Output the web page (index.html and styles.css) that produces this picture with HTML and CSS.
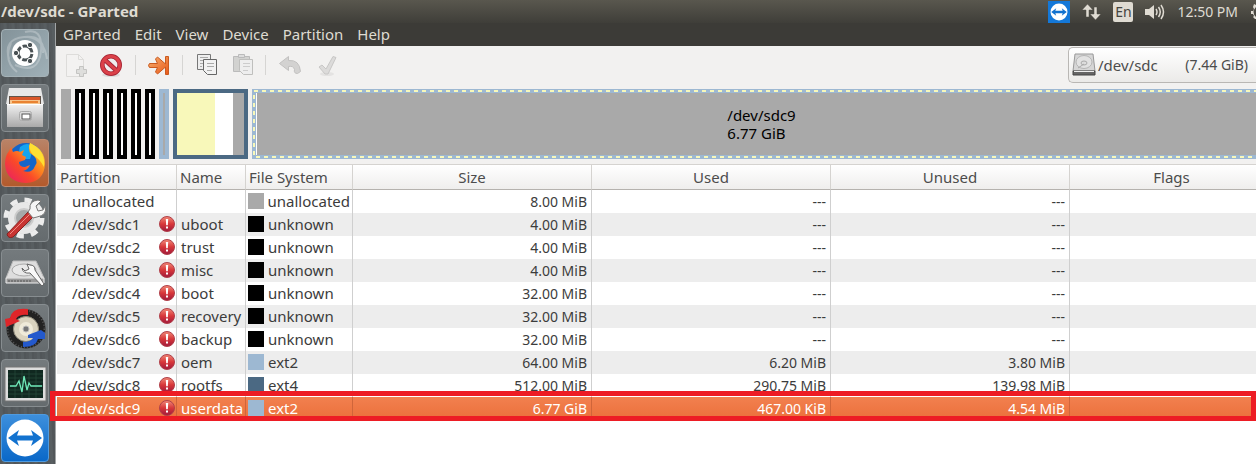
FILE: index.html
```html
<!DOCTYPE html>
<html lang="en">
<head>
<meta charset="utf-8">
<title>/dev/sdc - GParted</title>
<link rel="stylesheet" href="styles.css">
</head>
<body>
<svg width="0" height="0" class="defs" aria-hidden="true">
  <defs>
    <linearGradient id="red" x1="0" y1="0" x2="0" y2="1"><stop offset="0" stop-color="#f08a78"/><stop offset=".5" stop-color="#d8373a"/><stop offset="1" stop-color="#a01a3c"/></linearGradient>
    <linearGradient id="orange" x1="0" y1="0" x2="1" y2="1"><stop offset="0" stop-color="#f5b070"/><stop offset="1" stop-color="#ea5818"/></linearGradient>
    <linearGradient id="metal" x1="0" y1="0" x2="0" y2="1"><stop offset="0" stop-color="#f2f2f2"/><stop offset="1" stop-color="#a9a9a9"/></linearGradient>
    <linearGradient id="fire" x1="0" y1="1" x2="1" y2="0"><stop offset="0" stop-color="#e8186c"/><stop offset=".4" stop-color="#fa4a28"/><stop offset=".7" stop-color="#ffa01c"/><stop offset="1" stop-color="#fff04a"/></linearGradient>
    <symbol id="warn" viewBox="0 0 16 16"><circle cx="8" cy="8" r="7.500" fill="url(#red)" stroke="#b0404a"/><path d="M6.800 3h2.400l-.4 6.300H7.200zM7 10.500h2v2H7z" fill="#fff"/></symbol>
    <symbol id="teamviewer" viewBox="0 0 48 48"><circle cx="24" cy="24" r="18.500" fill="#fff"/><path d="M7 24l11-8-2 5.500h16L30 16l11 8-11 8 2-5.500H16l2 5.500z" fill="#1272cf"/></symbol>
  </defs>
</svg>

<header class="panel">
  <h1 class="panel-title">/dev/sdc - GParted</h1>
  <div class="indicators">
    <svg class="tv" width="22" height="22"><use href="#teamviewer"/></svg>
    <svg width="19" height="18" viewBox="0 0 19 18"><path d="M5.500 1L11 7H7v7H4V7H0zM13.500 17L8 11h4V4h3v7h4z" fill="#dfdbd2" stroke="#4a4943" stroke-width=".5"/></svg>
    <span class="lang">En</span>
    <svg class="sound" width="20" height="16" viewBox="0 0 20 16"><path d="M0 5h4l5-4v14l-5-4H0z" fill="#dfdbd2"/><path d="M11 5q2 3 0 6M13.500 3q3.500 5 0 10M16 1q5 7 0 14" fill="none" stroke="#dfdbd2" stroke-width="1.500"/></svg>
    <time>12:50 PM</time>
    <svg class="gear" width="5" height="18" viewBox="0 0 5 18"><path d="M5 2L3 1 2 4l1 2-1 2-2 0v3h2l1 2-1 1 2 2h1v-2q-5-5 0-10z" fill="#dfdbd2"/></svg>
  </div>
</header>

<div class="desktop">
  <nav class="launcher" aria-label="Launcher">
    <button class="tile dash" aria-label="Dash"><svg viewBox="0 0 48 48"><g fill="none" stroke="#fff" stroke-opacity=".25" stroke-width="2"><path d="M8 30Q2 10 23 8T42 24M14 36Q38 46 40 22T24 3M10 14Q2 32 16 43M27 8Q43 10 46 30"/></g><circle cx="24" cy="24" r="13" fill="#fff"/><circle cx="24" cy="24" r="7" fill="none" stroke="#4a5255" stroke-width="3" stroke-dasharray="12.700 2" stroke-dashoffset="-1"/><g fill="#4a5255" stroke="#fff"><circle cx="15" cy="24" r="2.700"/><circle cx="29" cy="16" r="2.700"/><circle cx="29" cy="32" r="2.700"/></g></svg></button>
    <button class="tile" aria-label="Files"><svg viewBox="0 0 48 48"><path d="M8 4h32l3 16H5z" fill="#e8e8e8"/><path d="M8 12h32v8H8z" fill="#62544a"/><path d="M9 13h30v3H9z" fill="#d9572a"/><path d="M9 16h30v4H9z" fill="#f6c48c"/><path d="M11 17h26v2H11z" fill="#e98332"/><path d="M6 20h36v23H6z" fill="url(#metal)"/><path d="M6 20.500h36" stroke="#fff"/><rect x="18.500" y="27.500" width="12" height="9" rx="2" fill="#ddd" stroke="#aaa"/><rect x="21" y="30" width="8" height="5" fill="#fff" stroke="#555"/></svg></button>
    <button class="tile firefox" aria-label="Firefox"><svg viewBox="0 0 48 48"><circle cx="25" cy="22" r="18" fill="#1465c8"/><path d="M19 8Q28 1 32 10L29 20 22 20 17 17z" fill="#16a4ee"/><path d="M29 4Q44 10 44 25Q43 43 25 44Q5 43 4 25Q4 17 8 12L10 8l2 5q4-2 7 0l4-2-2 5 4 2-1 3-6 2q0 5 6 5l5-2q-2 5-7 6 9 3 12-5Q39 20 29 14q-2-5 0-10z" fill="url(#fire)"/><path d="M29 4Q45 12 43 28q-4-8-11-12-5-6-3-12z" fill="#ffdf32"/></svg></button>
    <button class="tile" aria-label="System Settings"><svg viewBox="0 0 48 48"><circle cx="23" cy="24" r="16" fill="#e8e8e8"/><circle cx="23" cy="24" r="18" fill="none" stroke="#ececec" stroke-width="5" stroke-dasharray="7 7.130"/><circle cx="23" cy="24" r="9" fill="#a5a8a9" stroke="#ccc" stroke-width="2"/><path d="M6 40L28 17l5 5L12 43q-5 2-6-3z" fill="#c83432" stroke="#872221"/><path d="M9 40L29 20" stroke="#ef8b83"/><path d="M27 18l2-3q-1-8 8-9l3 1-5 5 2 5 5-1 2-4q3 9-8 11l-4 1z" fill="#f5f5f5" stroke="#777"/></svg></button>
    <button class="tile" aria-label="Disks"><svg viewBox="0 0 48 48"><path d="M12 12h23l8 17H5z" fill="#ddd" stroke="#bbb"/><path d="M5 29h38v5H5z" fill="#999" stroke="#eee"/><ellipse cx="23" cy="21" rx="12" ry="6" fill="#e8e8e8" stroke="#aaa"/><path d="M7 32h23" stroke="#555" stroke-dasharray="2 1"/><path d="M21 19q1 6 8 5l12 13 2-2-9-14q0-5-5-5l-3-1 2 5-4 2z" fill="#f8f8f8" stroke="#666"/></svg></button>
    <button class="tile" aria-label="Backup"><svg viewBox="0 0 48 48"><circle cx="25" cy="25" r="16" fill="none" stroke="#222" stroke-width="7"/><circle cx="25" cy="25" r="18.500" fill="none" stroke="#555" stroke-width="2" stroke-dasharray="1 2"/><circle cx="25" cy="25" r="12.500" fill="#d9d2be" stroke="#908b7b"/><circle cx="25" cy="25" r="7" fill="#efead9"/><circle cx="25" cy="25" r="3" fill="#777" stroke="#bbb"/><path d="M27 5Q11 3 9 14l-5 1 1 8 14-6-4-2q3-5 12-4z" fill="#df2529"/><path d="M22 43q13 0 15-8h7V29l-4-3-13 5v3l5 0q-2 4-10 4z" fill="#2459cc"/></svg></button>
    <button class="tile" aria-label="System Monitor"><svg viewBox="0 0 48 48"><path d="M4 8h41v34H4z" fill="#ddd" stroke="#777"/><path d="M7 11h35v28H7z" fill="#102820"/><g stroke="#264a3e" stroke-width=".7"><path d="M7 15h35M7 19h35M7 23h35M7 27h35M7 31h35M7 35h35M14 11v28M21 11v28M28 11v28M35 11v28"/></g><path d="M9 27h6l3-5 3 11 2-16 3 14 2-7 2 3h11" fill="none" stroke="#6fe8b8" stroke-width="1.300"/></svg></button>
    <button class="tile blue" aria-label="TeamViewer"><svg viewBox="0 0 48 48"><use href="#teamviewer"/></svg></button>
  </nav>

  <main class="window">
    <nav class="menubar" aria-label="Menu">
      <button>GParted</button><button>Edit</button><button>View</button><button>Device</button><button>Partition</button><button>Help</button>
    </nav>

    <div class="toolbar">
      <div class="tools">
        <button aria-label="New" disabled><svg width="24" height="26" viewBox="0 0 24 26"><path d="M2.500 2.500h12l5 5v17h-17z" fill="#f3f2f1" stroke="#dddcda"/><path d="M14.500 2.500v5h5" fill="none" stroke="#dddcda"/><path d="M15.500 14.500h4v3h3v4h-3v3h-4v-3h-3v-4h3z" fill="#dededc" stroke="#c4c4c2"/></svg></button>
        <button aria-label="Delete"><svg width="24" height="26" viewBox="0 0 24 26"><ellipse cx="11" cy="23" rx="9" ry="2" fill="#ddd"/><circle cx="11" cy="13" r="8.700" fill="#eee" stroke="#a52534" stroke-width="4.600"/><path d="M5 8l12 11" stroke="#a52534" stroke-width="4.600"/><circle cx="11" cy="13" r="8.700" fill="none" stroke="#db4149" stroke-width="3"/><path d="M5 8l12 11" stroke="#db4149" stroke-width="3"/></svg></button>
        <span class="sep"></span>
        <button aria-label="Resize/Move"><svg width="24" height="26" viewBox="0 0 24 26"><path d="M2.500 11.500h8L8.500 7l2-2 8 7V4.500h3v18h-3V15l-8 7-2-2 2-4.500h-8q-2-2 0-4z" fill="url(#orange)" stroke="#c95a20"/></svg></button>
        <span class="sep"></span>
        <button aria-label="Copy"><svg width="24" height="26" viewBox="0 0 24 26"><path d="M3.500 2.500h13v15h-13z" fill="#eee" stroke="#777"/><path d="M6 5.500h8M6 8.500h6M6 11.500h3M6 14.500h2" stroke="#aaa"/><path d="M9.500 7.500h13v15h-9l-4-4z" fill="#f2f2f2" stroke="#666"/><path d="M13 11.500h7M13 14.500h7M13 18.500h5" stroke="#aaa"/></svg></button>
        <button aria-label="Paste" disabled><svg width="24" height="26" viewBox="0 0 24 26"><path d="M3.500 4.500h16v15h-16z" fill="#d2d2d0" stroke="#bbb"/><path d="M8.500 5.500v-3h6v3z" fill="#ddd" stroke="#bbb"/><path d="M9.500 7.500h13v15h-9l-4-4z" fill="#eee" stroke="#bfbfbd"/><path d="M13 11.500h7M13 14.500h7M13 18.500h5" stroke="#ccc"/></svg></button>
        <span class="sep"></span>
        <button aria-label="Undo" disabled><svg width="24" height="26" viewBox="0 0 24 26"><path d="M2.500 11.500l9-7v4q11-1 12 11l-3 2q-4 0-3-4-1-4-6-3v4z" fill="#d3d2d1" stroke="#c2c1c0"/></svg></button>
        <button aria-label="Apply" disabled><svg width="24" height="26" viewBox="0 0 24 26"><ellipse cx="14" cy="22" rx="7" ry="2" fill="#e4e3e2"/><path d="M6 15l3-2 4 4L20 4.500l3 1L15 22h-3z" fill="#dcdbda" stroke="#c8c7c6"/></svg></button>
      </div>
      <button class="device" aria-label="Device"><svg width="24" height="26" viewBox="0 0 24 26"><path d="M3 2h18l2 17H1z" fill="#d6d6d6" stroke="#999"/><path d="M1 19h22v4H1z" fill="#666" stroke="#444"/><path d="M2 19.500h20" stroke="#eee"/><ellipse cx="12" cy="10" rx="8" ry="6.500" fill="#e2e2e2" stroke="#b5b5b5"/><ellipse cx="12" cy="11" rx="3" ry="2" fill="#ddd" stroke="#aaa"/><path d="M6 16l6-4" stroke="#aaa"/></svg><span>/dev/sdc</span><span class="size">(7.44 GiB)</span></button>
    </div>

    <section class="disk" aria-label="Disk layout">
      <div class="seg free"></div>
      <div class="seg unknown"></div><div class="seg unknown"></div><div class="seg unknown"></div><div class="seg unknown"></div><div class="seg unknown"></div><div class="seg unknown"></div>
      <div class="seg ext2"></div>
      <div class="seg ext4"><i class="used"></i><i class="unused"></i></div>
      <div class="seg selected"><div class="fill"><span>/dev/sdc9</span><span>6.77 GiB</span></div></div>
    </section>

    <div class="list">
      <table>
        <colgroup><col class="c-part"><col class="c-name"><col class="c-fs"><col class="c-num"><col class="c-num"><col class="c-num"><col></colgroup>
        <thead><tr><th>Partition</th><th>Name</th><th>File System</th><th class="mid">Size</th><th class="mid">Used</th><th class="mid">Unused</th><th class="mid flags">Flags</th></tr></thead>
        <tbody>
          <tr><td><div class="part">unallocated</div></td><td></td><td><div class="fs"><i class="sw-free"></i>unallocated</div></td><td>8.00 MiB</td><td>---</td><td>---</td><td></td></tr>
          <tr><td><div class="part">/dev/sdc1<svg><use href="#warn"/></svg></div></td><td>uboot</td><td><div class="fs"><i class="sw-unknown"></i>unknown</div></td><td>4.00 MiB</td><td>---</td><td>---</td><td></td></tr>
          <tr><td><div class="part">/dev/sdc2<svg><use href="#warn"/></svg></div></td><td>trust</td><td><div class="fs"><i class="sw-unknown"></i>unknown</div></td><td>4.00 MiB</td><td>---</td><td>---</td><td></td></tr>
          <tr><td><div class="part">/dev/sdc3<svg><use href="#warn"/></svg></div></td><td>misc</td><td><div class="fs"><i class="sw-unknown"></i>unknown</div></td><td>4.00 MiB</td><td>---</td><td>---</td><td></td></tr>
          <tr><td><div class="part">/dev/sdc4<svg><use href="#warn"/></svg></div></td><td>boot</td><td><div class="fs"><i class="sw-unknown"></i>unknown</div></td><td>32.00 MiB</td><td>---</td><td>---</td><td></td></tr>
          <tr><td><div class="part">/dev/sdc5<svg><use href="#warn"/></svg></div></td><td>recovery</td><td><div class="fs"><i class="sw-unknown"></i>unknown</div></td><td>32.00 MiB</td><td>---</td><td>---</td><td></td></tr>
          <tr><td><div class="part">/dev/sdc6<svg><use href="#warn"/></svg></div></td><td>backup</td><td><div class="fs"><i class="sw-unknown"></i>unknown</div></td><td>32.00 MiB</td><td>---</td><td>---</td><td></td></tr>
          <tr><td><div class="part">/dev/sdc7<svg><use href="#warn"/></svg></div></td><td>oem</td><td><div class="fs"><i class="sw-ext2"></i>ext2</div></td><td>64.00 MiB</td><td>6.20 MiB</td><td>3.80 MiB</td><td></td></tr>
          <tr><td><div class="part">/dev/sdc8<svg><use href="#warn"/></svg></div></td><td>rootfs</td><td><div class="fs"><i class="sw-ext4"></i>ext4</div></td><td>512.00 MiB</td><td>290.75 MiB</td><td>139.98 MiB</td><td></td></tr>
          <tr class="current"><td><div class="part">/dev/sdc9<svg><use href="#warn"/></svg></div></td><td>userdata</td><td><div class="fs"><i class="sw-ext2"></i>ext2</div></td><td>6.77 GiB</td><td>467.00 KiB</td><td>4.54 MiB</td><td></td></tr>
        </tbody>
      </table>
      <div class="highlight"></div>
    </div>
  </main>
</div>
</body>
</html>
```
FILE: styles.css
```css
* { box-sizing: border-box; }
body {
  margin: 0;
  min-height: 100vh;
  display: flex;
  flex-direction: column;
  overflow: hidden;
  background: #fff;
  color: #3c3c3c;
  font: 15px/18px "Noto Sans", "Open Sans", sans-serif;
}
.defs { position: absolute; }
button { margin: 0; padding: 0; border: 0; background: none; color: inherit; font: inherit; }
svg { display: block; flex: none; }

.panel {
  display: flex;
  justify-content: space-between;
  align-items: center;
  height: 23px;
  padding-left: 1px;
  background: linear-gradient(#59574e, #3f3e39);
  color: #dfdbd2;
}
.panel-title { margin: 0; font-size: 15px; line-height: 20px; padding-bottom: 2px; font-weight: 700; }
.indicators { display: flex; align-items: center; gap: 12px; font-size: 14px; }
.indicators time { margin-right: 1px; }
.tv { background: #1478d8; }
.lang {
  width: 20px;
  height: 20px;
  border-radius: 2px;
  background: #dfdbd2;
  color: #45443e;
  line-height: 20px;
  text-align: center;
}

.desktop { flex: 1; display: flex; }
.launcher {
  flex: none;
  display: flex;
  flex-direction: column;
  gap: 7px;
  width: 56px;
  padding: 6px 0 2px 1px;
  border-right: 1px solid #a2a5a6;
  background: repeating-linear-gradient(87deg, #54595c 0 2px, #585e61 3px 5px, #515659 6px 8px);
}
.tile {
  width: 48px;
  height: 48px;
  border: 1px solid #878d90;
  border-radius: 4px;
  background: linear-gradient(#747a7d, #656b6e);
}
.tile svg { width: 48px; height: 48px; margin: -1px; }
.tile.dash { background: linear-gradient(135deg, #84939a, #9fb0b7); border-color: #a4b1b6; }
.tile.firefox { background: linear-gradient(#b98367, #b35a2c); border-color: #c08a70; }
.tile.blue { background: linear-gradient(#3d8fdc, #0a68c8); border-color: #4f9be0; }

.window { flex: 1; min-width: 0; background: #fff; }
.menubar {
  display: flex;
  gap: 14px;
  height: 23px;
  padding-left: 7px;
  background: #3c3b37;
  color: #dfdbd2;
}
.menubar button { line-height: 23px; }

.toolbar {
  display: flex;
  justify-content: space-between;
  height: 38px;
  padding-left: 8px;
  background: #f2f1f0;
}
.tools { display: flex; align-items: center; gap: 12px; }
.sep { width: 1px; height: 20px; margin: 0 -1px; background: #d6d5d3; }
.device {
  display: flex;
  align-items: center;
  gap: 2px;
  width: 188px;
  height: 36px;
  margin-top: 1px;
  padding-left: 3px;
  border: 1px solid #b9b7b4;
  border-right: 0;
  border-radius: 5px 0 0 5px;
  background: linear-gradient(#fff, #ebeae8);
  color: #4c4c4c;
}
.size { margin: 0 8px 0 auto; font-size: 14px; }

.disk {
  display: flex;
  gap: 4px;
  height: 80px;
  padding: 5px 0 5px 5px;
  background: #f2f1f0;
}
.seg { flex: none; width: 10px; border: 4px solid; }
.free { border-color: #a9a9a9; background: #a9a9a9; }
.unknown { border-color: #000; background: #fff; }
.ext2 { border-color: #9db8d2; background: #a9a9a9; }
.ext4 { display: flex; width: 75px; border-color: #4b6983; background: #a9a9a9; }
.used { width: 38px; background: #f8f8ba; }
.unused { width: 18px; background: #fff; }
.selected {
  flex: 1;
  padding: 4px 0 4px 4px;
  border: 0;
  background:
    repeating-linear-gradient(90deg, #f8f8ba 0 4px, #9db8d2 4px 8px) 2px 1px / 100% 2px no-repeat,
    repeating-linear-gradient(90deg, #f8f8ba 0 4px, #9db8d2 4px 8px) 4px 67px / 100% 2px no-repeat,
    repeating-linear-gradient(#f8f8ba 0 4px, #9db8d2 4px 8px) 1px 6px / 2px 60px no-repeat,
    #9db8d2;
}
.fill {
  display: grid;
  align-content: center;
  justify-content: center;
  height: 100%;
  padding-left: 10px;
  border-left: 1px solid #fff;
  background: #a9a9a9;
  color: #000;
}

.list { position: relative; padding-left: 1px; }
table { width: 100%; table-layout: fixed; border-collapse: separate; border-spacing: 0; }
.c-part { width: 120px; }
.c-name { width: 69px; }
.c-fs { width: 107px; }
.c-num { width: 239px; }
th {
  height: 26px;
  padding: 0 3px 1px;
  border: solid #d5d3d0;
  border-width: 1px 1px 1px 0;
  border-bottom-color: #b5b2ae;
  background: linear-gradient(#fff, #efeeed);
  color: #4c4c4c;
  font-weight: 400;
  text-align: left;
  white-space: nowrap;
}
.mid { text-align: center; }
.flags { padding-left: 20px; }
td {
  height: 23px;
  padding: 0 4px;
  border-right: 1px solid #cfcfcf;
  font-size: 14px;
  text-align: right;
  white-space: nowrap;
}
td:nth-child(-n+3) { padding-bottom: 2px; font-size: 15px; text-align: left; }
td:nth-child(3) { padding: 0 2px 2px; }
th:last-child, td:last-child { border-right: 0; }
tbody tr:nth-child(even) { background: #ededed; }
.part { display: flex; align-items: center; justify-content: space-between; padding-left: 11px; margin-right: -3px; }
.part svg { width: 16px; height: 16px; }
.fs { display: flex; align-items: center; gap: 4px; }
.fs i { width: 16px; height: 16px; }
.sw-free { background: #a9a9a9; }
.sw-unknown { background: #000; }
.sw-ext2 { background: #9db8d2; }
.sw-ext4 { background: #4b6983; }
tbody tr.current { background: linear-gradient(#f2804f, #eb6f3a); color: #fff; }
.current td { border-right-color: #d0653a; }
.highlight {
  position: absolute;
  left: -6px;
  right: 0;
  bottom: -1px;
  height: 30px;
  border: 5px solid #ed1c24;
}
```
